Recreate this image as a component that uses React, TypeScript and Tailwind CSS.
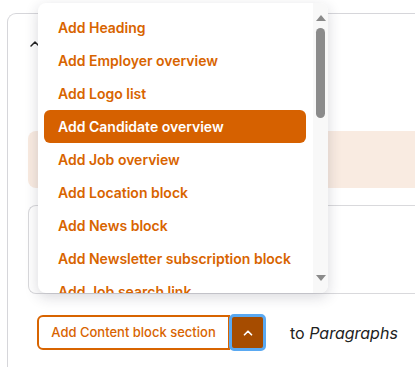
import { ChevronUp } from "lucide-react"

const items = [
  "Add Heading",
  "Add Employer overview",
  "Add Logo list",
  "Add Candidate overview",
  "Add Job overview",
  "Add Location block",
  "Add News block",
  "Add Newsletter subscription block",
  "Add Job search link",
]

function Dropdown() {
  return (
    <div className="absolute left-[38px] top-[3px] w-[290px] h-[290px] bg-white rounded-[8px] shadow-[0_4px_14px_rgba(40,40,60,0.18)] overflow-hidden flex">
      {/* options */}
      <ul className="flex-1 pt-[8px] pl-[6px] pr-[7px] flex flex-col">
        {items.map((label, i) => (
          <li
            key={label}
            className={`h-[33px] shrink-0 flex items-center pl-[14px] rounded-[6px] text-[14px] font-semibold whitespace-nowrap ${
              i === 3 ? "bg-[#d66100] text-white" : "text-[#d86400]"
            }`}
          >
            {label}
          </li>
        ))}
      </ul>
      {/* scrollbar */}
      <div className="w-[15px] bg-[#f8f8f8] flex flex-col items-center pt-[12px] pb-[12px]">
        <div className="w-0 h-0 border-l-[5px] border-r-[5px] border-b-[6px] border-l-transparent border-r-transparent border-b-[#8a8a8a]" />
        <div className="mt-[7px] w-[9px] h-[90px] rounded-full bg-[#8b8b8b]" />
        <div className="flex-1" />
        <div className="w-0 h-0 border-l-[5px] border-r-[5px] border-t-[6px] border-l-transparent border-r-transparent border-t-[#8a8a8a]" />
      </div>
    </div>
  )
}

export default function App() {
  return (
    <div
      className="relative w-[415px] h-[367px] overflow-hidden bg-white text-[#222]"
      style={{ fontFamily: "Inter, 'Noto Sans', sans-serif" }}
    >
      <div className="ml-[7px] mt-[13px] h-[354px] border-l border-t border-[#d6d6da] rounded-tl-[9px] pl-[20px] pt-[22px] flex flex-col">
        <ChevronUp className="w-[16px] h-[16px] text-[#222] -ml-[1px]" strokeWidth={2.2} />
        <div className="mt-[79px] h-[57px] bg-[#f9ebe1] rounded-l-[8px]" />
        <div className="mt-[17px] h-[89px] border border-r-0 border-[#d9d9dc] rounded-l-[8px]" />
        <div className="mt-[20px] flex items-center">
          <button className="ml-[9px] h-[35px] w-[193px] border-2 border-[#d86400] rounded-l-[6px] text-[13px] font-medium text-[#d86400] flex items-center justify-center">
            Add Content block section
          </button>
          <button className="h-[37px] w-[37px] -ml-[1px] rounded-[5px] border-[3px] border-[#5aa9f2] bg-[#a64c00] flex items-center justify-center">
            <ChevronUp className="w-[14px] h-[14px] text-white" strokeWidth={3} />
          </button>
          <span className="ml-[24px] text-[16px] text-[#222]">
            to <em className="italic">Paragraphs</em>
          </span>
        </div>
      </div>
      <Dropdown />
    </div>
  )
}
